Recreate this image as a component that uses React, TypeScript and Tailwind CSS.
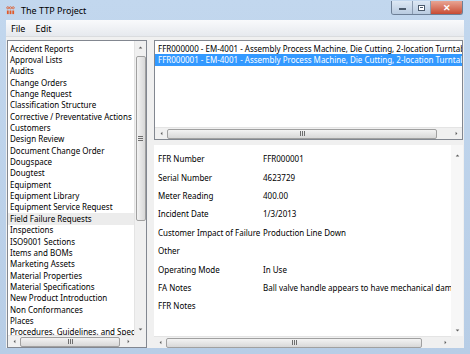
import React from "react";

const navItems = [
  "Accident Reports",
  "Approval Lists",
  "Audits",
  "Change Orders",
  "Change Request",
  "Classification Structure",
  "Corrective / Preventative Actions",
  "Customers",
  "Design Review",
  "Document Change Order",
  "Dougspace",
  "Dougtest",
  "Equipment",
  "Equipment Library",
  "Equipment Service Request",
  "Field Failure Requests",
  "Inspections",
  "ISO9001 Sections",
  "Items and BOMs",
  "Marketing Assets",
  "Material Properties",
  "Material Specifications",
  "New Product Introduction",
  "Non Conformances",
  "Places",
  "Procedures, Guidelines, and Specs",
];

const details: [string, string][] = [
  ["FFR Number", "FFR000001"],
  ["Serial Number", "4623729"],
  ["Meter Reading", "400.00"],
  ["Incident Date", "1/3/2013"],
  ["Customer Impact of Failure", "Production Line Down"],
  ["Other", ""],
  ["Operating Mode", "In Use"],
  ["FA Notes", "Ball valve handle appears to have mechanical damage"],
  ["FFR Notes", ""],
];

function Arrow({ dir }: { dir: "up" | "down" | "left" | "right" }) {
  const pts = {
    up: "1,4 4,1 7,4",
    down: "1,1 4,4 7,1",
    left: "4,1 1,4 4,7",
    right: "1,1 4,4 1,7",
  }[dir];
  const box = dir === "up" || dir === "down" ? "0 0 8 5" : "0 0 5 8";
  return (
    <svg viewBox={box} className={dir === "up" || dir === "down" ? "h-[3px] w-[5px]" : "h-[5px] w-[3px]"}>
      <polygon points={pts} fill="#606060" />
    </svg>
  );
}

function Grip({ vertical }: { vertical?: boolean }) {
  return vertical ? (
    <div className="flex flex-col gap-[1px]">
      <div className="h-[1px] w-[5px] bg-[#6e6e6e]" />
      <div className="h-[1px] w-[5px] bg-[#6e6e6e]" />
      <div className="h-[1px] w-[5px] bg-[#6e6e6e]" />
    </div>
  ) : (
    <div className="flex gap-[1px]">
      <div className="h-[5px] w-[1px] bg-[#6e6e6e]" />
      <div className="h-[5px] w-[1px] bg-[#6e6e6e]" />
      <div className="h-[5px] w-[1px] bg-[#6e6e6e]" />
    </div>
  );
}

export default function App() {
  return (
    <div
      className="flex h-[354px] w-[470px] flex-col overflow-hidden bg-gradient-to-b from-[#c2d7ee] to-[#b7cde6] text-black"
      style={{ fontFamily: '"Noto Sans", "Open Sans", sans-serif' }}
    >
      {/* Title bar */}
      <div className="relative flex h-[20px] shrink-0 items-center pl-[6px]">
        <svg viewBox="0 0 10 10" className="h-[9px] w-[9px]">
          <circle cx="2" cy="2" r="1.2" fill="none" stroke="#e05a2a" strokeWidth="0.9" />
          <circle cx="5" cy="2" r="1.2" fill="none" stroke="#e05a2a" strokeWidth="0.9" />
          <circle cx="8" cy="2" r="1.2" fill="none" stroke="#e05a2a" strokeWidth="0.9" />
          <rect x="1" y="5" width="2" height="4" fill="#e05a2a" />
          <rect x="4" y="5" width="2" height="4" fill="#e05a2a" />
          <rect x="7" y="5" width="2" height="4" fill="#e05a2a" />
        </svg>
        <span className="ml-[6px] text-[9px] leading-none">The TTP Project</span>
        <div className="absolute right-[7px] top-[1px] flex h-[14px] overflow-hidden rounded-b-[3px] border border-t-0 border-[#6d7f96]">
          <div className="flex w-[21px] items-center justify-center border-r border-[#8a9bb0] bg-gradient-to-b from-[#dde8f4] to-[#b9cbe0]">
            <div className="mt-[3px] h-[2px] w-[7px] border border-[#4b5a6c] bg-white" />
          </div>
          <div className="flex w-[18px] items-center justify-center border-r border-[#8a9bb0] bg-gradient-to-b from-[#dde8f4] to-[#b9cbe0]">
            <div className="h-[6px] w-[7px] border border-[#4b5a6c] bg-white p-[1px]">
              <div className="h-full w-full border-t border-[#4b5a6c]" />
            </div>
          </div>
          <div className="flex w-[31px] items-center justify-center bg-gradient-to-b from-[#e8a493] to-[#c74a33] text-[9px] font-bold leading-none text-white">
            ✕
          </div>
        </div>
      </div>

      {/* Client */}
      <div className="mx-[6px] mb-[6px] flex min-h-0 flex-1 flex-col bg-[#f0f0f0]">
        {/* Menu */}
        <div className="flex h-[17px] shrink-0 items-center gap-[10px] border-b border-[#dadcdf] bg-gradient-to-b from-[#f9fafc] to-[#e6e9ee] pl-[5px] text-[9px] leading-none">
          <span>File</span>
          <span>Edit</span>
        </div>

        <div className="flex min-h-0 flex-1 pt-[3px] pr-[1px]">
          {/* Left nav list */}
          <div className="ml-[1px] flex w-[140px] shrink-0 flex-col border border-[#828790] bg-white">
            <div className="flex min-h-0 flex-1">
              <div className="min-w-0 flex-1 overflow-hidden pt-[2px]">
                {navItems.map((t) => (
                  <div
                    key={t}
                    className={
                      "flex h-[11.35px] items-center whitespace-nowrap pl-[2px] text-[8px] leading-none " +
                      (t === "Field Failure Requests" ? "bg-[#ececec]" : "")
                    }
                  >
                    {t}
                  </div>
                ))}
              </div>
              {/* vertical scrollbar */}
              <div className="flex w-[12px] shrink-0 flex-col items-center border-l border-[#e4e4e4] bg-[#f0f0f0]">
                <div className="flex h-[12px] items-center justify-center">
                  <Arrow dir="up" />
                </div>
                <div className="mt-[3px] flex h-[165px] w-[10px] items-center justify-center rounded-[2px] border border-[#a0a0a0] bg-gradient-to-r from-[#f3f3f3] to-[#d8d8d8]">
                  <Grip vertical />
                </div>
                <div className="flex-1" />
                <div className="flex h-[12px] items-center justify-center">
                  <Arrow dir="down" />
                </div>
              </div>
            </div>
            {/* horizontal scrollbar */}
            <div className="flex h-[12px] shrink-0">
              <div className="flex flex-1 items-center border-t border-[#e4e4e4] bg-[#f0f0f0]">
                <div className="flex w-[12px] justify-center">
                  <Arrow dir="left" />
                </div>
                <div className="flex h-[10px] w-[100px] items-center justify-center rounded-[2px] border border-[#a0a0a0] bg-gradient-to-b from-[#f3f3f3] to-[#d8d8d8]">
                  <Grip />
                </div>
                <div className="flex-1" />
                <div className="flex w-[12px] justify-center">
                  <Arrow dir="right" />
                </div>
              </div>
              <div className="w-[12px] bg-[#f0f0f0]" />
            </div>
          </div>

          {/* Splitter */}
          <div className="w-[7px] shrink-0" />

          {/* Right side */}
          <div className="flex min-w-0 flex-1 flex-col overflow-hidden">
            {/* Top list */}
            <div className="flex h-[100px] shrink-0 flex-col border border-[#828790] bg-white">
              <div className="min-h-0 flex-1 overflow-hidden pt-[2px]">
                <div className="flex h-[11.35px] items-center whitespace-nowrap pl-[3px] text-[8px] leading-none">
                  FFR000000 - EM-4001 - Assembly Process Machine, Die Cutting, 2-location Turntable
                </div>
                <div className="flex h-[11.35px] items-center whitespace-nowrap bg-[#3399ff] pl-[3px] text-[8px] leading-none text-white">
                  FFR000001 - EM-4001 - Assembly Process Machine, Die Cutting, 2-location Turntable
                </div>
              </div>
              <div className="flex h-[12px] shrink-0 items-center border-t border-[#e4e4e4] bg-[#f0f0f0]">
                <div className="flex w-[12px] justify-center">
                  <Arrow dir="left" />
                </div>
                <div className="flex h-[10px] w-[270px] items-center justify-center rounded-[2px] border border-[#a0a0a0] bg-gradient-to-b from-[#f3f3f3] to-[#d8d8d8]">
                  <Grip />
                </div>
                <div className="flex-1" />
                <div className="flex w-[12px] justify-center">
                  <Arrow dir="right" />
                </div>
              </div>
            </div>

            {/* Splitter */}
            <div className="h-[5px] shrink-0" />

            {/* Detail panel */}
            <div className="flex min-h-0 flex-1 flex-col bg-white">
              <div className="flex min-h-0 flex-1">
                <div className="min-w-0 flex-1 overflow-hidden pt-[5px] pl-[4px]">
                  {details.map(([k, v]) => (
                    <div key={k} className="flex h-[18.4px] items-center whitespace-nowrap text-[8px] leading-none">
                      <span className="w-[105px] shrink-0">{k}</span>
                      <span>{v}</span>
                    </div>
                  ))}
                </div>
                <div className="flex w-[12px] shrink-0 flex-col items-center bg-[#f7f7f7]">
                  <div className="flex h-[14px] items-end justify-center pb-[2px]">
                    <Arrow dir="up" />
                  </div>
                  <div className="flex-1" />
                  <div className="flex h-[12px] items-center justify-center">
                    <Arrow dir="down" />
                  </div>
                </div>
              </div>
              <div className="flex h-[12px] shrink-0">
                <div className="flex flex-1 items-center border-t border-[#e4e4e4] bg-[#f0f0f0]">
                  <div className="flex w-[12px] justify-center">
                    <Arrow dir="left" />
                  </div>
                  <div className="flex h-[10px] w-[256px] items-center justify-center rounded-[2px] border border-[#a0a0a0] bg-gradient-to-b from-[#f3f3f3] to-[#d8d8d8]">
                    <Grip />
                  </div>
                  <div className="flex-1" />
                  <div className="flex w-[12px] justify-center">
                    <Arrow dir="right" />
                  </div>
                </div>
                <div className="w-[12px] bg-[#f0f0f0]" />
              </div>
            </div>
          </div>
        </div>
      </div>
    </div>
  );
}
